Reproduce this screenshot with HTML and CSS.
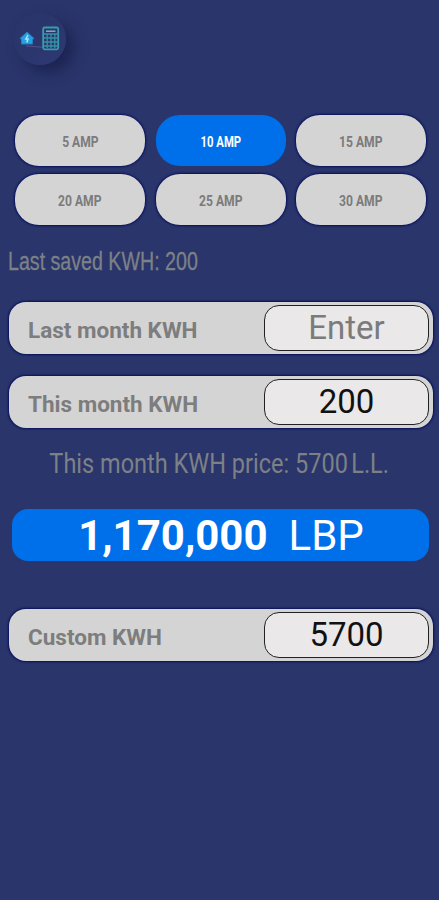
FILE: index.html
```html
<!DOCTYPE html>
<html lang="en">
<head>
    <meta charset="UTF-8">
    <meta name="viewport" content="width=device-width, initial-scale=1.0">
    <title>KWH Calculator</title>
    <link rel="stylesheet" href="styles.css">
</head>
<body>
    <header class="header">
        <div class="logo">
            <svg width="52" height="52" viewBox="0 0 52 52" fill="none">
                <path d="M6 25.5 L13 19 L20 25.5 L18.5 26.5 V31 H7.5 V26.5 Z" fill="#299fe0" stroke="#277dbd" stroke-width="1" stroke-linejoin="round"/>
                <path d="M14 22 L11.8 26 H14 L12.8 29.5" stroke="#a5ecff" stroke-width="1.4"/>
                <path d="M12 33 L29 34.3" stroke="#52508b" stroke-width="1"/>
                <rect x="29.2" y="14.5" width="15" height="21.8" rx="1.5" stroke="#369da9" stroke-width="1.8"/>
                <path d="M32 18.2 H41.5" stroke="#8fb0c4" stroke-width="1.4"/>
                <path d="M30 21 H43.5 M30 25 H43.5 M30 29 H43.5 M30 33 H43.5 M33.2 21 V35 M37 21 V35 M40.8 21 V35" stroke="#3491a3" stroke-width="1.3"/>
            </svg>
        </div>
    </header>

    <main class="container">
        <div class="amps">
            <button class="amp"><span>5 AMP</span></button>
            <button class="amp active"><span>10 AMP</span></button>
            <button class="amp"><span>15 AMP</span></button>
            <button class="amp"><span>20 AMP</span></button>
            <button class="amp"><span>25 AMP</span></button>
            <button class="amp"><span>30 AMP</span></button>
        </div>

        <p class="saved"><span>Last saved KWH: 200</span></p>

        <div class="row">
            <label class="label" for="last">Last month KWH</label>
            <input class="field" id="last" type="text" placeholder="Enter">
        </div>
        <div class="row">
            <label class="label" for="current">This month KWH</label>
            <input class="field" id="current" type="text" value="200">
        </div>

        <p class="price"><span>This month KWH price: 5700<i></i>L.L.</span></p>

        <div class="total">
            <strong>1,170,000</strong>
            <span>LBP</span>
        </div>

        <div class="row custom">
            <label class="label" for="custom">Custom KWH</label>
            <input class="field" id="custom" type="text" value="5700">
        </div>
    </main>
</body>
</html>
```
FILE: styles.css
```css
* {
    box-sizing: border-box;
}

body {
    margin: 0;
    min-height: 900px;
    background: #2a356b;
    font-family: Roboto, "Liberation Sans", sans-serif;
    color: #7d8186;
}

.header {
    height: 115px;
    padding: 13px 14px;
}

.logo {
    width: 52px;
    height: 52px;
    border-radius: 50%;
    background: linear-gradient(135deg, #2a356b 30%, #2e3873);
    box-shadow: 8px 8px 14px #1c2452;
}

.logo svg {
    display: block;
}

.amps {
    display: grid;
    grid-template-columns: repeat(3, 130px);
    column-gap: 10.5px;
    row-gap: 8px;
    padding-left: 15px;
}

.amp {
    height: 51px;
    padding: 2px 0 0;
    border: 0;
    border-radius: 24px;
    background: #d4d4d4;
    box-shadow: 0 0 2px 1px #06105c;
    font: bold 15.5px Roboto, "Liberation Sans", sans-serif;
    color: #7b7b7b;
}

.amp span {
    display: inline-block;
    transform: scaleX(0.78);
}

.amp.active {
    background: #0070ea;
    box-shadow: none;
    color: #fff;
}

.amp.active span {
    transform: scaleX(0.73);
}

.saved {
    height: 77px;
    margin: 0;
    padding: 20px 0 0 8px;
    font-family: "Liberation Sans", Arial, sans-serif;
    font-size: 25px;
    line-height: 32px;
    white-space: nowrap;
    -webkit-text-stroke: 0.3px #7d8186;
}

.saved span {
    display: inline-block;
    transform: scaleX(0.785);
    transform-origin: left;
}

.row {
    display: flex;
    align-items: center;
    justify-content: space-between;
    width: 424px;
    height: 52px;
    margin: 0 0 22px 9px;
    padding: 0 4px 0 19px;
    border-radius: 17px;
    background: #d4d4d4;
    box-shadow: 0 0 2px 1px #06105c;
}

.label {
    padding-top: 3px;
    font-size: 22.5px;
    font-weight: bold;
    color: #7d7d7d;
}

.field {
    width: 165px;
    height: 46px;
    padding: 0 0 1px;
    border: 1.5px solid #222;
    border-radius: 15px;
    background: #eae8e8;
    font: 33px Roboto, "Liberation Sans", sans-serif;
    text-align: center;
    color: #111;
}

.field::placeholder {
    color: #7b7b7b;
}

.price {
    height: 59px;
    margin: 0;
    text-align: center;
    font-size: 28px;
    line-height: 27px;
    white-space: nowrap;
}

.price span {
    display: inline-block;
    transform: scaleX(0.84);
}

.price i {
    display: inline-block;
    width: 4px;
}

.total {
    display: flex;
    align-items: center;
    justify-content: center;
    gap: 21px;
    width: 417px;
    height: 52px;
    margin: 0 0 48px 12px;
    padding-left: 1px;
    border-radius: 16px;
    background: #0070ea;
    font-size: 42px;
    color: #fff;
}
```
